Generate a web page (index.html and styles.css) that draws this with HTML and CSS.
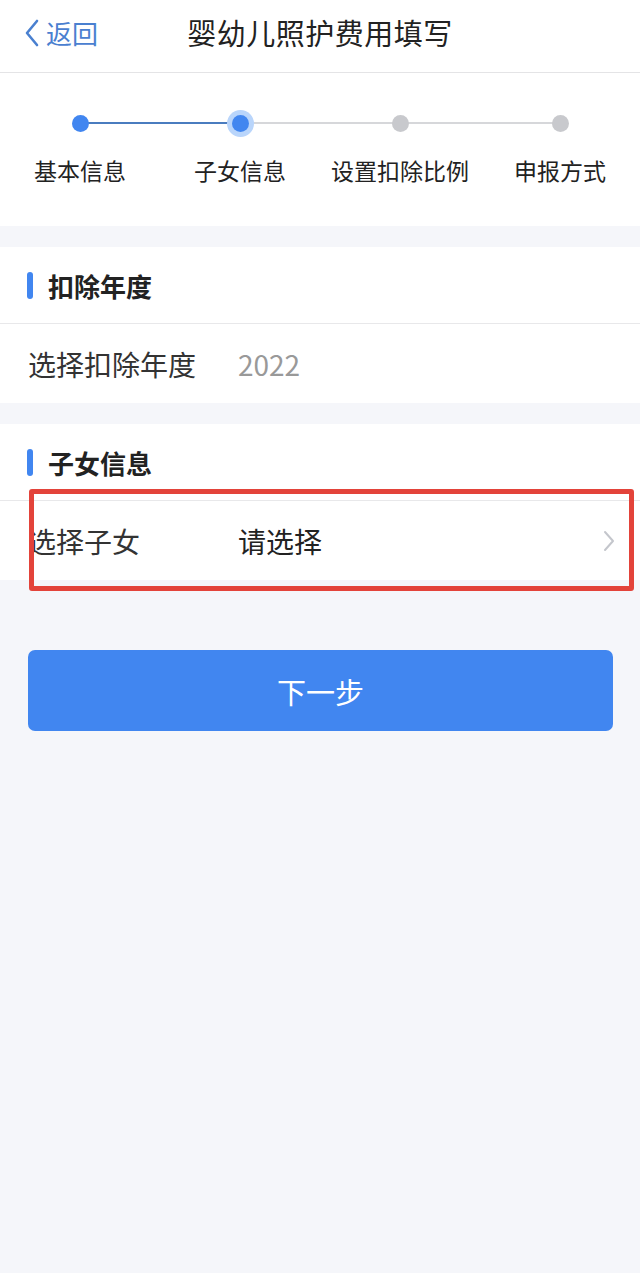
FILE: index.html
```html
<!DOCTYPE html>
<html lang="zh-CN">
<head>
    <meta charset="UTF-8">
    <meta name="viewport" content="width=device-width, initial-scale=1.0">
    <title>婴幼儿照护费用填写</title>
    <link rel="stylesheet" href="styles.css">
</head>
<body>
    <div class="nav-bar">
        <a href="#" class="back-btn">
            <svg class="back-icon" viewBox="0 0 16 28" width="16" height="28">
                <path d="M13 2 L3 14 L13 26" fill="none" stroke="#4a80d0" stroke-width="2.6" stroke-linecap="round" stroke-linejoin="round"/>
            </svg>
            <span>返回</span>
        </a>
        <h1 class="nav-title">婴幼儿照护费用填写</h1>
    </div>

    <div class="steps">
        <div class="step done">
            <div class="step-track"><span class="dot"></span></div>
            <div class="step-label">基本信息</div>
        </div>
        <div class="step current">
            <div class="step-track"><span class="dot"></span></div>
            <div class="step-label">子女信息</div>
        </div>
        <div class="step">
            <div class="step-track"><span class="dot"></span></div>
            <div class="step-label">设置扣除比例</div>
        </div>
        <div class="step">
            <div class="step-track"><span class="dot"></span></div>
            <div class="step-label">申报方式</div>
        </div>
    </div>

    <div class="section">
        <div class="section-title">扣除年度</div>
        <div class="form-row">
            <div class="row-label">选择扣除年度</div>
            <div class="row-value muted">2022</div>
        </div>
    </div>

    <div class="section">
        <div class="section-title">子女信息</div>
        <div class="form-row highlighted">
            <div class="row-label">选择子女</div>
            <div class="row-value">请选择</div>
            <svg class="chevron" viewBox="0 0 12 22" width="12" height="22">
                <path d="M2 2 L10 11 L2 20" fill="none" stroke="#c4c6cc" stroke-width="2" stroke-linecap="round" stroke-linejoin="round"/>
            </svg>
            <div class="mark-box"></div>
        </div>
    </div>

    <div class="actions">
        <button class="btn next-btn">下一步</button>
    </div>
</body>
</html>
```

FILE: styles.css
```css
:root {
    --primary-color: #4186f0;
    --line-color: #e8e8ea;
    --page-bg: #f5f6fa;
    --text-color: #222;
}

* {
    margin: 0;
    padding: 0;
    box-sizing: border-box;
}

body {
    font-family: "Noto Sans CJK SC", "Noto Sans", sans-serif;
    background-color: var(--page-bg);
    color: var(--text-color);
    min-height: 100vh;
}

.nav-bar {
    height: 73px;
    background: #fff;
    border-bottom: 1px solid #e4e4e6;
    display: flex;
    align-items: center;
    justify-content: center;
    position: relative;
}

.back-btn {
    position: absolute;
    left: 24px;
    top: 14px;
    display: flex;
    align-items: center;
    gap: 6px;
    color: #4a80d0;
    text-decoration: none;
    font-size: 26px;
}

.back-icon {
    display: block;
}

.nav-title {
    font-size: 29px;
    font-weight: 400;
    color: #222;
    letter-spacing: 0.5px;
    margin-top: -8px;
}

.steps {
    background: #fff;
    display: flex;
    padding: 36px 0 34px;
    height: 153px;
}

.step {
    flex: 1;
    display: flex;
    flex-direction: column;
    align-items: center;
}

.step-track {
    position: relative;
    width: 100%;
    height: 28px;
    display: flex;
    align-items: center;
    justify-content: center;
}

.step-track::before {
    content: "";
    position: absolute;
    left: 50%;
    right: -50%;
    top: 13px;
    height: 2px;
    background: #d6d7da;
}

.step:last-child .step-track::before {
    display: none;
}

.step.done .step-track::before {
    background: #4a7cbf;
}

.dot {
    width: 17px;
    height: 17px;
    border-radius: 50%;
    background: #c8c9cd;
    position: relative;
    z-index: 1;
}

.step.done .dot,
.step.current .dot {
    background: var(--primary-color);
}

.step.current .dot {
    box-shadow: 0 0 0 5px #b9d5fb;
}

.step-label {
    margin-top: 18px;
    font-size: 23px;
    line-height: 30px;
    color: #222;
}

.section {
    background: #fff;
    margin-top: 21px;
}

.section-title {
    height: 77px;
    display: flex;
    align-items: center;
    padding-left: 48px;
    font-size: 26px;
    font-weight: 700;
    position: relative;
    border-bottom: 1px solid var(--line-color);
}

.section-title::before {
    content: "";
    position: absolute;
    left: 27px;
    top: 25px;
    width: 6px;
    height: 27px;
    border-radius: 3px;
    background: var(--primary-color);
}

.form-row {
    height: 79px;
    display: flex;
    align-items: center;
    padding: 0 28px;
    position: relative;
}

.row-label {
    width: 210px;
    font-size: 28px;
    color: #333;
}

.row-value {
    flex: 1;
    font-size: 28px;
    color: #222;
}

.row-value.muted {
    color: #999;
}

.chevron {
    margin-right: -3px;
}

.mark-box {
    position: absolute;
    left: 29px;
    right: 6px;
    top: -12px;
    bottom: -11px;
    border: 5px solid #e3433a;
    border-radius: 3px;
    pointer-events: none;
}

.actions {
    padding: 70px 27px 0 28px;
}

.btn {
    width: 100%;
    height: 81px;
    border: none;
    border-radius: 7px;
    font-family: inherit;
    font-size: 29px;
    color: #fff;
    cursor: pointer;
}

.next-btn {
    background-color: var(--primary-color);
}
```
